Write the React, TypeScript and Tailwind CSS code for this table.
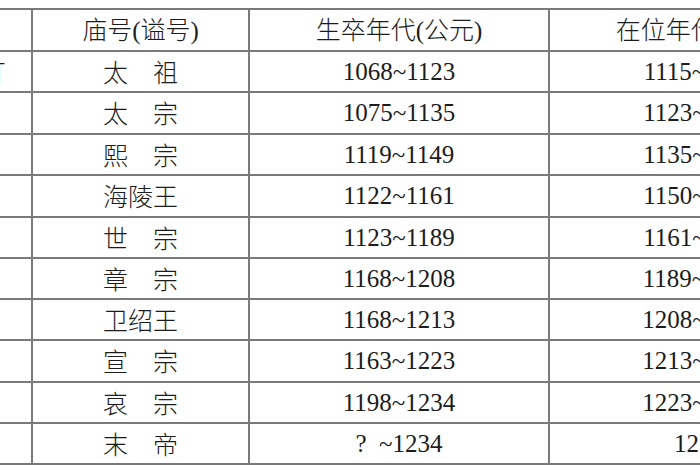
import React from 'react';

interface Reign {
  name: string;
  title: string;
  life: string;
  reign: string;
  h: string;
}

// heights include the 2px bottom rule, so the lines land where the scan has them
const rows: Reign[] = [
  { name: '完颜阿骨打', title: '太\u3000祖', life: '1068~1123', reign: '1115~1123', h: 'h-[41px]' },
  { name: '完颜晟', title: '太\u3000宗', life: '1075~1135', reign: '1123~1135', h: 'h-[42px]' },
  { name: '完颜亶', title: '熙\u3000宗', life: '1119~1149', reign: '1135~1149', h: 'h-[41px]' },
  { name: '完颜亮', title: '海陵王', life: '1122~1161', reign: '1150~1161', h: 'h-[42px]' },
  { name: '完颜雍', title: '世\u3000宗', life: '1123~1189', reign: '1161~1189', h: 'h-[41px]' },
  { name: '完颜璟', title: '章\u3000宗', life: '1168~1208', reign: '1189~1208', h: 'h-[41px]' },
  { name: '完颜永济', title: '卫绍王', life: '1168~1213', reign: '1208~1213', h: 'h-[41px]' },
  { name: '完颜珣', title: '宣\u3000宗', life: '1163~1223', reign: '1213~1223', h: 'h-[42px]' },
  { name: '完颜守绪', title: '哀\u3000宗', life: '1198~1234', reign: '1223~1234', h: 'h-[41px]' },
  { name: '完颜承麟', title: '末\u3000帝', life: '?\u00a0\u00a0~1234', reign: '1234', h: 'h-[41px]' },
];

const cjk = "font-['Noto_Sans_CJK_SC',sans-serif] font-light text-[25px]";
const num = "font-['Liberation_Serif','Noto_Sans_CJK_SC',serif] text-[25px]";

const Row = ({ h, cells, head }: { h: string; cells: React.ReactNode[]; head?: boolean }) => (
  <div className={`flex ${h} border-b-2 border-[#7a7a7a]`}>
    <div className={`w-[160px] shrink-0 flex items-center justify-center pr-[18px] border-r-2 border-[#7a7a7a] ${cjk}`}>
      {cells[0]}
    </div>
    <div className={`w-[217px] shrink-0 flex items-center justify-center border-r-2 border-[#7a7a7a] ${cjk}`}>
      {cells[1]}
    </div>
    <div className={`w-[300px] shrink-0 flex items-center justify-center border-r-2 border-[#7a7a7a] ${head ? cjk : num}`}>
      {cells[2]}
    </div>
    <div className={`w-[300px] shrink-0 flex items-center justify-center border-r-2 border-[#7a7a7a] ${head ? cjk : num}`}>
      {cells[3]}
    </div>
  </div>
);

const Paren = ({ children }: { children: string }) => (
  <span className="font-['Liberation_Serif',serif] font-normal">{children}</span>
);

export default function App() {
  return (
    <div className="w-[700px] h-[470px] overflow-hidden bg-white text-[#1c1c1c] pt-[8px]">
      <div className="ml-[-127px] w-[979px] border-t-2 border-[#7a7a7a] whitespace-nowrap">
        <Row
          head
          h="h-[42px]"
          cells={[
            '姓\u3000名',
            <span>庙号<Paren>(</Paren>谥号<Paren>)</Paren></span>,
            <span>生卒年代<Paren>(</Paren>公元<Paren>)</Paren></span>,
            <span>在位年代<Paren>(</Paren>公元<Paren>)</Paren></span>,
          ]}
        />
        {rows.map((r) => (
          <Row key={r.title} h={r.h} cells={[r.name, r.title, r.life, r.reign]} />
        ))}
      </div>
    </div>
  );
}
